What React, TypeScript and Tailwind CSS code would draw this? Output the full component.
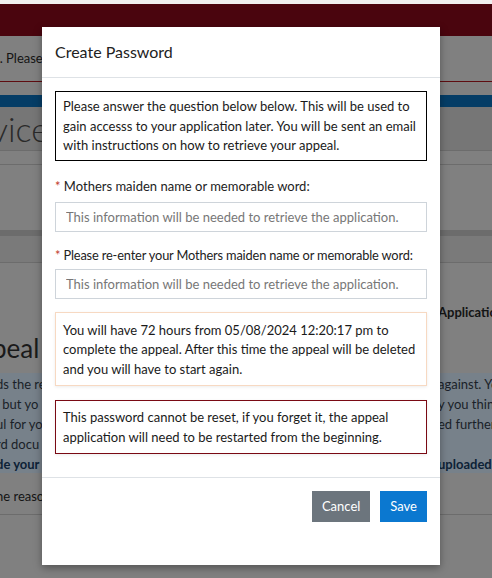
import React from "react";

export default function App() {
  return (
    <div
      className="relative w-[492px] h-[578px] overflow-hidden bg-[#808080] text-[#1f1f1f]"
      style={{ fontFamily: "Lato, 'Open Sans', sans-serif" }}
    >
      {/* Background page (dimmed) */}
      <div className="h-[4px] bg-[#f0f0f0]" />
      <div className="h-[32px] bg-[#4a050e]" />
      <div className="h-[46px] border-b border-[#5e0c10] flex items-center">
        <span className="ml-[-5px] text-[13px] text-[#141414] whitespace-nowrap">t. Please</span>
      </div>
      <div className="h-[13px]" />
      <div className="h-[12px] bg-[#053d66]" />
      <div className="h-[44px] bg-[#767676] flex items-center border-b border-[#6c6c6c]">
        <span className="ml-[-9px] text-[34px] font-light text-[#2a2a2a] leading-none whitespace-nowrap">vice</span>
      </div>
      <div className="h-[14px] border-b border-[#6c6c6c]" />
      <div className="h-[65px]" />
      <div className="h-[6px] bg-[#6c6c6c]" />
      <div className="h-[27px] bg-[#7a7a7a] border-b border-[#6c6c6c]" />
      <div className="relative h-[110px]">
        <span className="absolute left-[438px] top-[40px] text-[13px] font-bold text-[#141414] whitespace-nowrap">Applications</span>
        <span className="absolute left-[-8px] top-[72px] text-[26px] text-[#1a1a1a] whitespace-nowrap leading-none">peal</span>
      </div>
      <div className="h-[100px] bg-[#77818a] flex text-[13px] text-[#1a1f28] leading-[20px] pt-[1px]">
        <div className="ml-[-4px] w-[46px] flex flex-col whitespace-nowrap">
          <span>ds the re</span>
          <span>, but yo</span>
          <span>ul for yo</span>
          <span>rd docu</span>
          <span className="font-bold text-[#0d2236]">de your</span>
        </div>
        <div className="ml-[396px] flex flex-col whitespace-nowrap">
          <span>against. You</span>
          <span>y you think</span>
          <span>ed further</span>
          <span>&nbsp;</span>
          <span className="font-bold text-[#0d2236]">uploaded</span>
        </div>
      </div>
      <div className="h-[42px] border-b border-[#6c6c6c] flex items-center pt-[6px]">
        <span className="ml-[-4px] text-[13px] text-[#141414] whitespace-nowrap">he reaso</span>
      </div>

      {/* Modal */}
      <div className="absolute left-[42px] top-[27px] w-[398px] h-[538px] bg-white shadow-[0_3px_8px_rgba(0,0,0,0.35)] flex flex-col">
        <div className="h-[51px] px-[13px] flex items-center border-b border-[#dee2e6]">
          <h2 className="text-[16px] text-[#222] leading-none">Create Password</h2>
        </div>
        <div className="px-[13px] pt-[13px] flex flex-col text-[13px] leading-[19.5px] text-[#1a1a1a]">
          <div className="border border-black px-[7px] pt-[5px] pb-[4px]">
            Please answer the question below below. This will be used to gain accesss to your application later. You will be sent an email with instructions on how to retrieve your appeal.
          </div>
          <label className="mt-[16px] block text-[#222]">
            <span className="text-[#c0392b]">*</span> Mothers maiden name or memorable word:
          </label>
          <input
            className="mt-[6px] h-[30px] border border-[#ced4da] px-[10px] text-[13px] placeholder:text-[#777] outline-none"
            placeholder="This information will be needed to retrieve the application."
          />
          <label className="mt-[14px] block text-[#222] whitespace-nowrap text-[12.8px] tracking-[-0.15px]">
            <span className="text-[#c0392b]">*</span> Please re-enter your Mothers maiden name or memorable word:
          </label>
          <input
            className="mt-[3px] h-[30px] border border-[#ced4da] px-[10px] text-[13px] placeholder:text-[#777] outline-none"
            placeholder="This information will be needed to retrieve the application."
          />
          <div className="mt-[13px] border border-[#f7d9c2] shadow-[0_1px_3px_rgba(0,0,0,0.08)] px-[7px] pt-[8px] pb-[6px]">
            You will have 72 hours from 05/08/2024 12:20:17 pm to complete the appeal. After this time the appeal will be deleted and you will have to start again.
          </div>
          <div className="mt-[14px] border border-[#7a0a14] shadow-[0_1px_3px_rgba(0,0,0,0.08)] px-[7px] pt-[7px] pb-[6px]">
            This password cannot be reset, if you forget it, the appeal application will need to be restarted from the beginning.
          </div>
        </div>
        <div className="mt-[23px] border-t border-[#dee2e6] px-[13px] pt-[13px] flex justify-end gap-[10px]">
          <button className="h-[31px] px-[10px] bg-[#6c757d] text-white text-[13px]">Cancel</button>
          <button className="h-[31px] px-[10px] bg-[#0b78d0] text-white text-[13px]">Save</button>
        </div>
      </div>
    </div>
  );
}
